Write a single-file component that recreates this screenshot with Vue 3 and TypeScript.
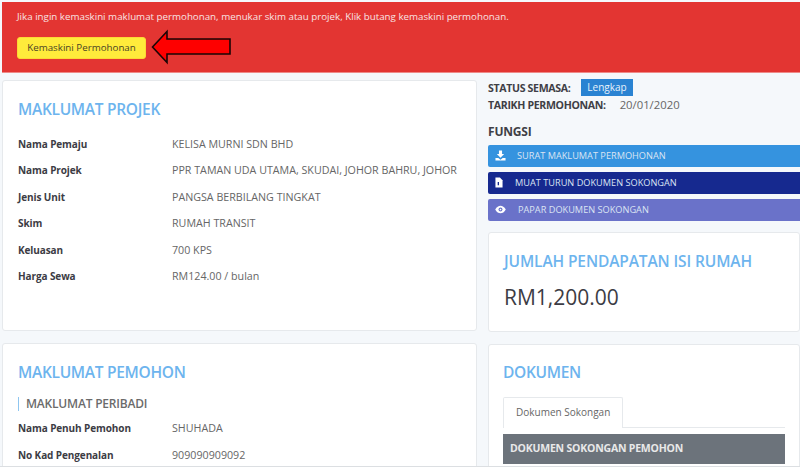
<template>
  <div class="page">
    <div class="alert">
      <p class="alert-text">Jika ingin kemaskini maklumat permohonan, menukar skim atau projek, Klik butang kemaskini permohonan.</p>
      <div class="alert-actions">
        <button class="btn-update" type="button">Kemaskini Permohonan</button>
        <svg class="arrow" width="81" height="36" viewBox="0 0 81 36">
          <path d="M1.5 18 L16 2.5 V10 H79 V25 H16 V33.5 Z" fill="#fe0000" stroke="#1a0505" stroke-width="1.6" />
        </svg>
      </div>
    </div>

    <div class="content">
      <div class="column-left">
        <section class="card card-project">
          <h2 class="title">MAKLUMAT PROJEK</h2>
          <dl class="rows">
            <div v-for="row in projectRows" :key="row.label" class="row">
              <dt>{{ row.label }}</dt>
              <dd>{{ row.value }}</dd>
            </div>
          </dl>
        </section>

        <section class="card card-applicant">
          <h2 class="title">MAKLUMAT PEMOHON</h2>
          <h3 class="subtitle">MAKLUMAT PERIBADI</h3>
          <dl class="rows">
            <div v-for="row in applicantRows" :key="row.label" class="row">
              <dt>{{ row.label }}</dt>
              <dd>{{ row.value }}</dd>
            </div>
          </dl>
        </section>
      </div>

      <div class="column-right">
        <div class="status">
          <div class="status-line">
            <strong>STATUS SEMASA:</strong>
            <span class="badge">Lengkap</span>
          </div>
          <div class="status-line date-line">
            <strong>TARIKH PERMOHONAN:</strong>
            <span class="date">20/01/2020</span>
          </div>
        </div>

        <h4 class="fungsi">FUNGSI</h4>
        <div class="actions">
          <a class="action action-blue">
            <svg class="icon" width="11" height="11" viewBox="0 0 12 12">
              <path d="M4.3 0.5 H7.7 V4.4 H10 L6 8.4 L2 4.4 H4.3 Z M0.5 8.6 H3.6 L6 10.6 L8.4 8.6 H11.5 V11.5 H0.5 Z" fill="#fff" />
            </svg>
            <span>SURAT MAKLUMAT PERMOHONAN</span>
          </a>
          <a class="action action-navy">
            <svg class="icon icon-file" width="8" height="11" viewBox="0 0 9 12">
              <path d="M0.5 0.5 H5.5 L8.5 3.5 V11.5 H0.5 Z" fill="#fff" />
              <path d="M3 5.5 H4.5 V9 H3 Z" fill="#16298f" />
            </svg>
            <span>MUAT TURUN DOKUMEN SOKONGAN</span>
          </a>
          <a class="action action-purple">
            <svg class="icon icon-eye" width="11" height="9" viewBox="0 0 13 10">
              <path d="M0.3 5 C2 1.8 4.2 0.5 6.5 0.5 C8.8 0.5 11 1.8 12.7 5 C11 8.2 8.8 9.5 6.5 9.5 C4.2 9.5 2 8.2 0.3 5 Z" fill="#fff" />
              <circle cx="6.5" cy="5" r="2.3" fill="#6a72c9" />
              <circle cx="6.5" cy="5" r="1" fill="#fff" />
            </svg>
            <span>PAPAR DOKUMEN SOKONGAN</span>
          </a>
        </div>

        <section class="card card-income">
          <h2 class="title title-income">JUMLAH PENDAPATAN ISI RUMAH</h2>
          <div class="amount">RM1,200.00</div>
        </section>

        <section class="card card-docs">
          <h2 class="title">DOKUMEN</h2>
          <div class="tabs">
            <span class="tab">Dokumen Sokongan</span>
          </div>
          <div class="table-head">DOKUMEN SOKONGAN PEMOHON</div>
        </section>
      </div>
    </div>
  </div>
</template>

<script setup lang="ts">
interface InfoRow {
  label: string
  value: string
}

const projectRows: InfoRow[] = [
  { label: 'Nama Pemaju', value: 'KELISA MURNI SDN BHD' },
  { label: 'Nama Projek', value: 'PPR TAMAN UDA UTAMA, SKUDAI, JOHOR BAHRU, JOHOR' },
  { label: 'Jenis Unit', value: 'PANGSA BERBILANG TINGKAT' },
  { label: 'Skim', value: 'RUMAH TRANSIT' },
  { label: 'Keluasan', value: '700 KPS' },
  { label: 'Harga Sewa', value: 'RM124.00 / bulan' }
]

const applicantRows: InfoRow[] = [
  { label: 'Nama Penuh Pemohon', value: 'SHUHADA' },
  { label: 'No Kad Pengenalan', value: '909090909092' }
]
</script>

<style>
html,
body {
  margin: 0;
  background: #fff;
  overflow: hidden;
}
</style>

<style scoped>
.page {
  width: 800px;
  height: 467px;
  overflow: hidden;
  box-sizing: border-box;
  padding: 2px 0 0 2px;
  background: #f5f8fb;
  border-bottom: 1px solid #dcdfe2;
  font-family: "Open Sans", "Noto Sans", sans-serif;
  color: #555;
}

.alert {
  height: 71px;
  box-sizing: border-box;
  padding: 9px 15px 0;
  background: #e33532;
  border-bottom: 1px solid #ee8a88;
}

.alert-text {
  margin: 0;
  height: 19px;
  font-size: 9.75px;
  line-height: 12px;
  color: #f8e3e2;
}

.alert-actions {
  display: flex;
  align-items: center;
  gap: 5px;
}

.btn-update {
  width: 129px;
  height: 22px;
  margin-top: 0;
  padding: 0;
  border: 1px solid #fdd835;
  border-radius: 3px;
  background: #ffeb3b;
  font-family: inherit;
  font-size: 9.75px;
  color: #4a4326;
}

.arrow {
  display: block;
  margin-top: -1px;
}

.content {
  display: grid;
  grid-template-columns: 475px 1fr;
  column-gap: 11px;
  margin-top: 7px;
}

.column-left,
.column-right {
  display: flex;
  flex-direction: column;
}

.card {
  box-sizing: border-box;
  background: #fff;
  border: 1px solid #e6e9ec;
  border-radius: 3px;
}

.card-project {
  height: 251px;
  padding: 18px 15px 0;
}

.card-applicant {
  height: 160px;
  margin-top: 12px;
  padding: 18px 15px 0;
}

.title {
  margin: 0;
  font-size: 15.5px;
  line-height: 21px;
  font-weight: 600;
  letter-spacing: -0.3px;
  color: #6db4ee;
}

.rows {
  margin: 17.5px 0 0;
}

.row {
  display: flex;
  height: 26.5px;
  font-size: 10px;
  line-height: 13px;
}

.row dt {
  width: 154px;
  flex: none;
  font-weight: 700;
  letter-spacing: -0.1px;
  color: #3c3c44;
}

.row dd {
  margin: 0;
  font-size: 10.7px;
  color: #666;
  white-space: nowrap;
}

.subtitle {
  margin: 14px 0 0;
  padding-left: 7px;
  border-left: 1.5px solid #8fc6f0;
  font-size: 12px;
  line-height: 14px;
  font-weight: 600;
  letter-spacing: -0.2px;
  color: #6b6b6b;
}

.card-applicant .rows {
  margin-top: 11px;
}

.status {
  margin-top: -1px;
  font-size: 10.6px;
}

.status-line {
  display: flex;
  align-items: center;
  gap: 11px;
  height: 17px;
}

.status-line strong {
  font-weight: 700;
  letter-spacing: -0.35px;
  color: #3f3f46;
}

.date-line {
  gap: 14px;
}

.badge {
  height: 17px;
  padding: 0 6px;
  background: #2a83d2;
  font-size: 10px;
  line-height: 17px;
  color: #e8f2fb;
}

.date {
  font-size: 11.3px;
  color: #666;
}

.fungsi {
  margin: 11px 0 0;
  font-size: 12px;
  line-height: 15px;
  font-weight: 700;
  letter-spacing: -0.2px;
  color: #3f3f46;
}

.actions {
  display: flex;
  flex-direction: column;
  gap: 5px;
  margin-top: 5.5px;
}

.action {
  display: flex;
  align-items: center;
  height: 22px;
  padding-left: 7px;
  border-radius: 2px 0 0 2px;
  font-size: 9.2px;
  color: #dbe4f3;
}

.action-blue {
  background: #3593df;
}

.action-navy {
  background: #16298f;
}

.action-purple {
  background: #6a72c9;
}

.icon {
  flex: none;
  margin-right: 11px;
}

.icon-file {
  margin-right: 12px;
}

.icon-eye {
  margin-right: 12px;
}

.card-income {
  height: 100px;
  margin-top: 11px;
  padding: 18px 15px 0;
}

.title-income {
  white-space: nowrap;
  letter-spacing: -0.12px;
}

.amount {
  margin-top: 12px;
  font-size: 21px;
  line-height: 27px;
  color: #3c3c44;
}

.card-docs {
  flex: 1;
  min-height: 124px;
  margin-top: 12px;
  padding: 17px 14px 0;
}

.tabs {
  display: flex;
  height: 30px;
  margin-top: 14px;
  border-bottom: 1px solid #e6e9ec;
}

.tab {
  box-sizing: border-box;
  height: 31px;
  padding: 0 12px;
  background: #fff;
  border: 1px solid #e6e9ec;
  border-bottom: none;
  border-radius: 2px 2px 0 0;
  font-size: 10px;
  line-height: 29px;
  color: #666;
}

.table-head {
  height: 30px;
  margin-top: 6px;
  padding-left: 7px;
  background: #6c737b;
  font-size: 10.5px;
  font-weight: 700;
  line-height: 29px;
  letter-spacing: -0.2px;
  color: #e8e8e8;
}
</style>
